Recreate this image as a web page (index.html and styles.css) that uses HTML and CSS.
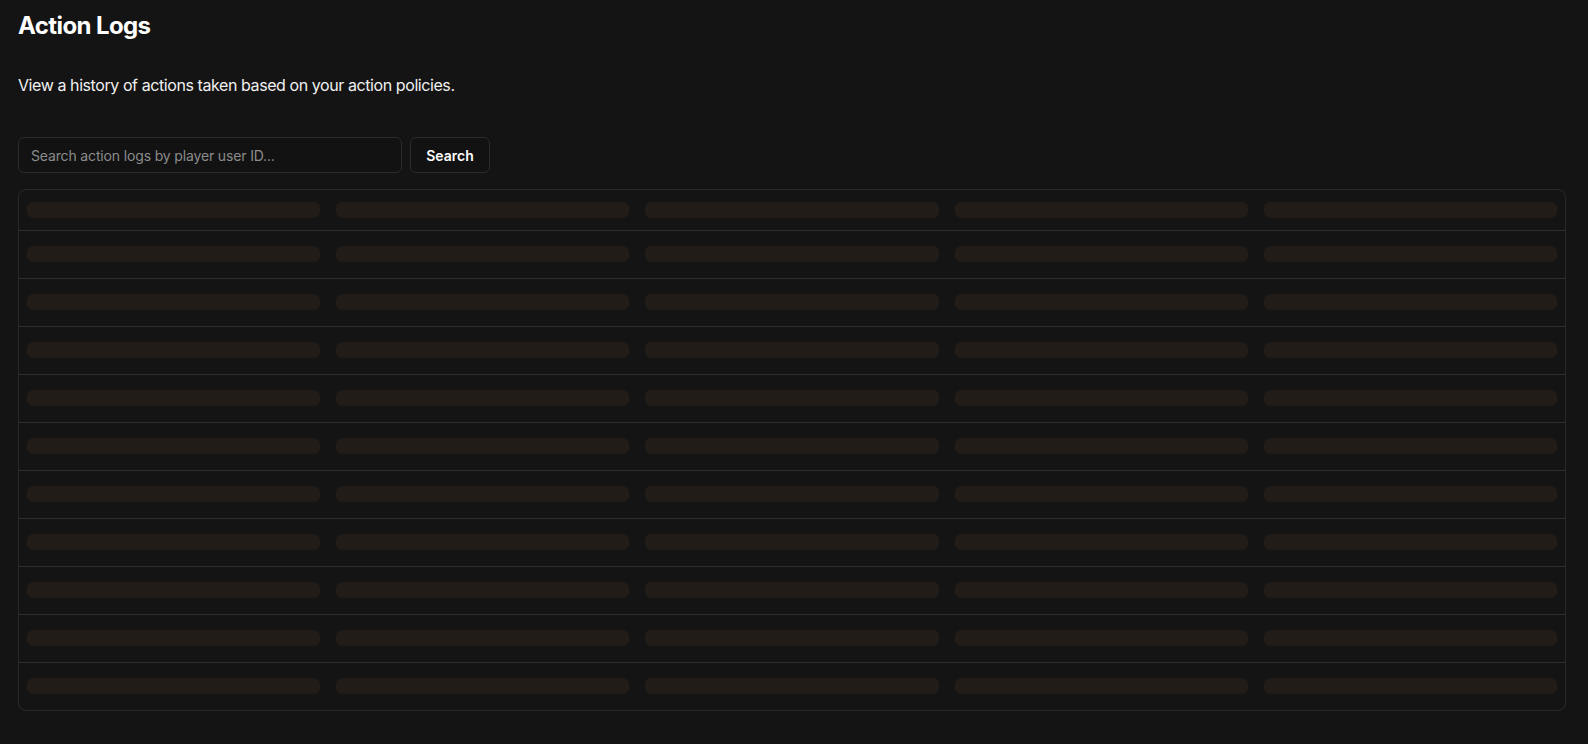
FILE: index.html
```html
<!DOCTYPE html>
<html lang="en">
  <head>
    <meta charset="UTF-8" />
    <meta name="viewport" content="width=device-width, initial-scale=1.0" />
    <title>Action Logs</title>
    <link rel="stylesheet" href="styles.css">
  </head>
  <body>
    <div class="page">
      <h1 class="page-title">Action Logs</h1>
      <p class="page-desc">View a history of actions taken based on your action policies.</p>

      <div class="search-row">
        <input type="text" class="search-input" placeholder="Search action logs by player user ID..." />
        <button class="search-button">Search</button>
      </div>

      <div class="log-table-wrap">
        <table class="log-table" id="logTable">
          <thead>
            <tr>
              <th><div class="skeleton"></div></th>
              <th><div class="skeleton"></div></th>
              <th><div class="skeleton"></div></th>
              <th><div class="skeleton"></div></th>
              <th><div class="skeleton"></div></th>
            </tr>
          </thead>
          <tbody id="logBody"></tbody>
        </table>
      </div>
    </div>

    <script>
      // loading placeholder rows
      const body = document.getElementById('logBody');
      for (let i = 0; i < 10; i++) {
        const row = document.createElement('tr');
        for (let j = 0; j < 5; j++) {
          const cell = document.createElement('td');
          const bar = document.createElement('div');
          bar.className = 'skeleton';
          cell.appendChild(bar);
          row.appendChild(cell);
        }
        body.appendChild(row);
      }
    </script>
  </body>
</html>
```

FILE: styles.css
```css
body {
  margin: 0;
  background-color: #141414;
  color: #f5f5f5;
  font-family: Inter, 'Noto Sans', sans-serif;
}

.page {
  padding: 10px 22px 30px 18px;
}

.page-title {
  margin: 0;
  font-size: 24px;
  line-height: 32px;
  font-weight: 700;
  color: #ffffff;
  letter-spacing: -0.6px;
}

.page-desc {
  margin: 31px 0 0;
  font-size: 16px;
  line-height: 24px;
  color: #f0f0f0;
  letter-spacing: -0.42px;
}

.search-row {
  display: flex;
  gap: 8px;
  margin-top: 40px;
}

.search-input {
  width: 384px;
  height: 36px;
  box-sizing: border-box;
  padding: 0 12px;
  background-color: #121212;
  border: 1px solid #2c2c2c;
  border-radius: 6px;
  color: #f5f5f5;
  font-family: inherit;
  font-size: 14px;
  letter-spacing: -0.15px;
  outline: none;
}

.search-input::placeholder {
  color: #8c8c8c;
}

.search-button {
  width: 80px;
  height: 36px;
  background-color: #121212;
  border: 1px solid #2c2c2c;
  border-radius: 6px;
  color: #ffffff;
  font-family: inherit;
  font-size: 14px;
  font-weight: 600;
  cursor: pointer;
}

.log-table-wrap {
  margin-top: 16px;
  border: 1px solid #2a2a2a;
  border-radius: 8px;
  overflow: hidden;
}

.log-table {
  width: 100%;
  border-collapse: collapse;
  table-layout: fixed;
}

.log-table th {
  padding: 12px 8px;
}

.log-table td {
  padding: 15px 8px 16px;
  border-top: 1px solid #2c2c2c;
}

.skeleton {
  height: 16px;
  border-radius: 6px;
  background-color: #221c18;
}
```
